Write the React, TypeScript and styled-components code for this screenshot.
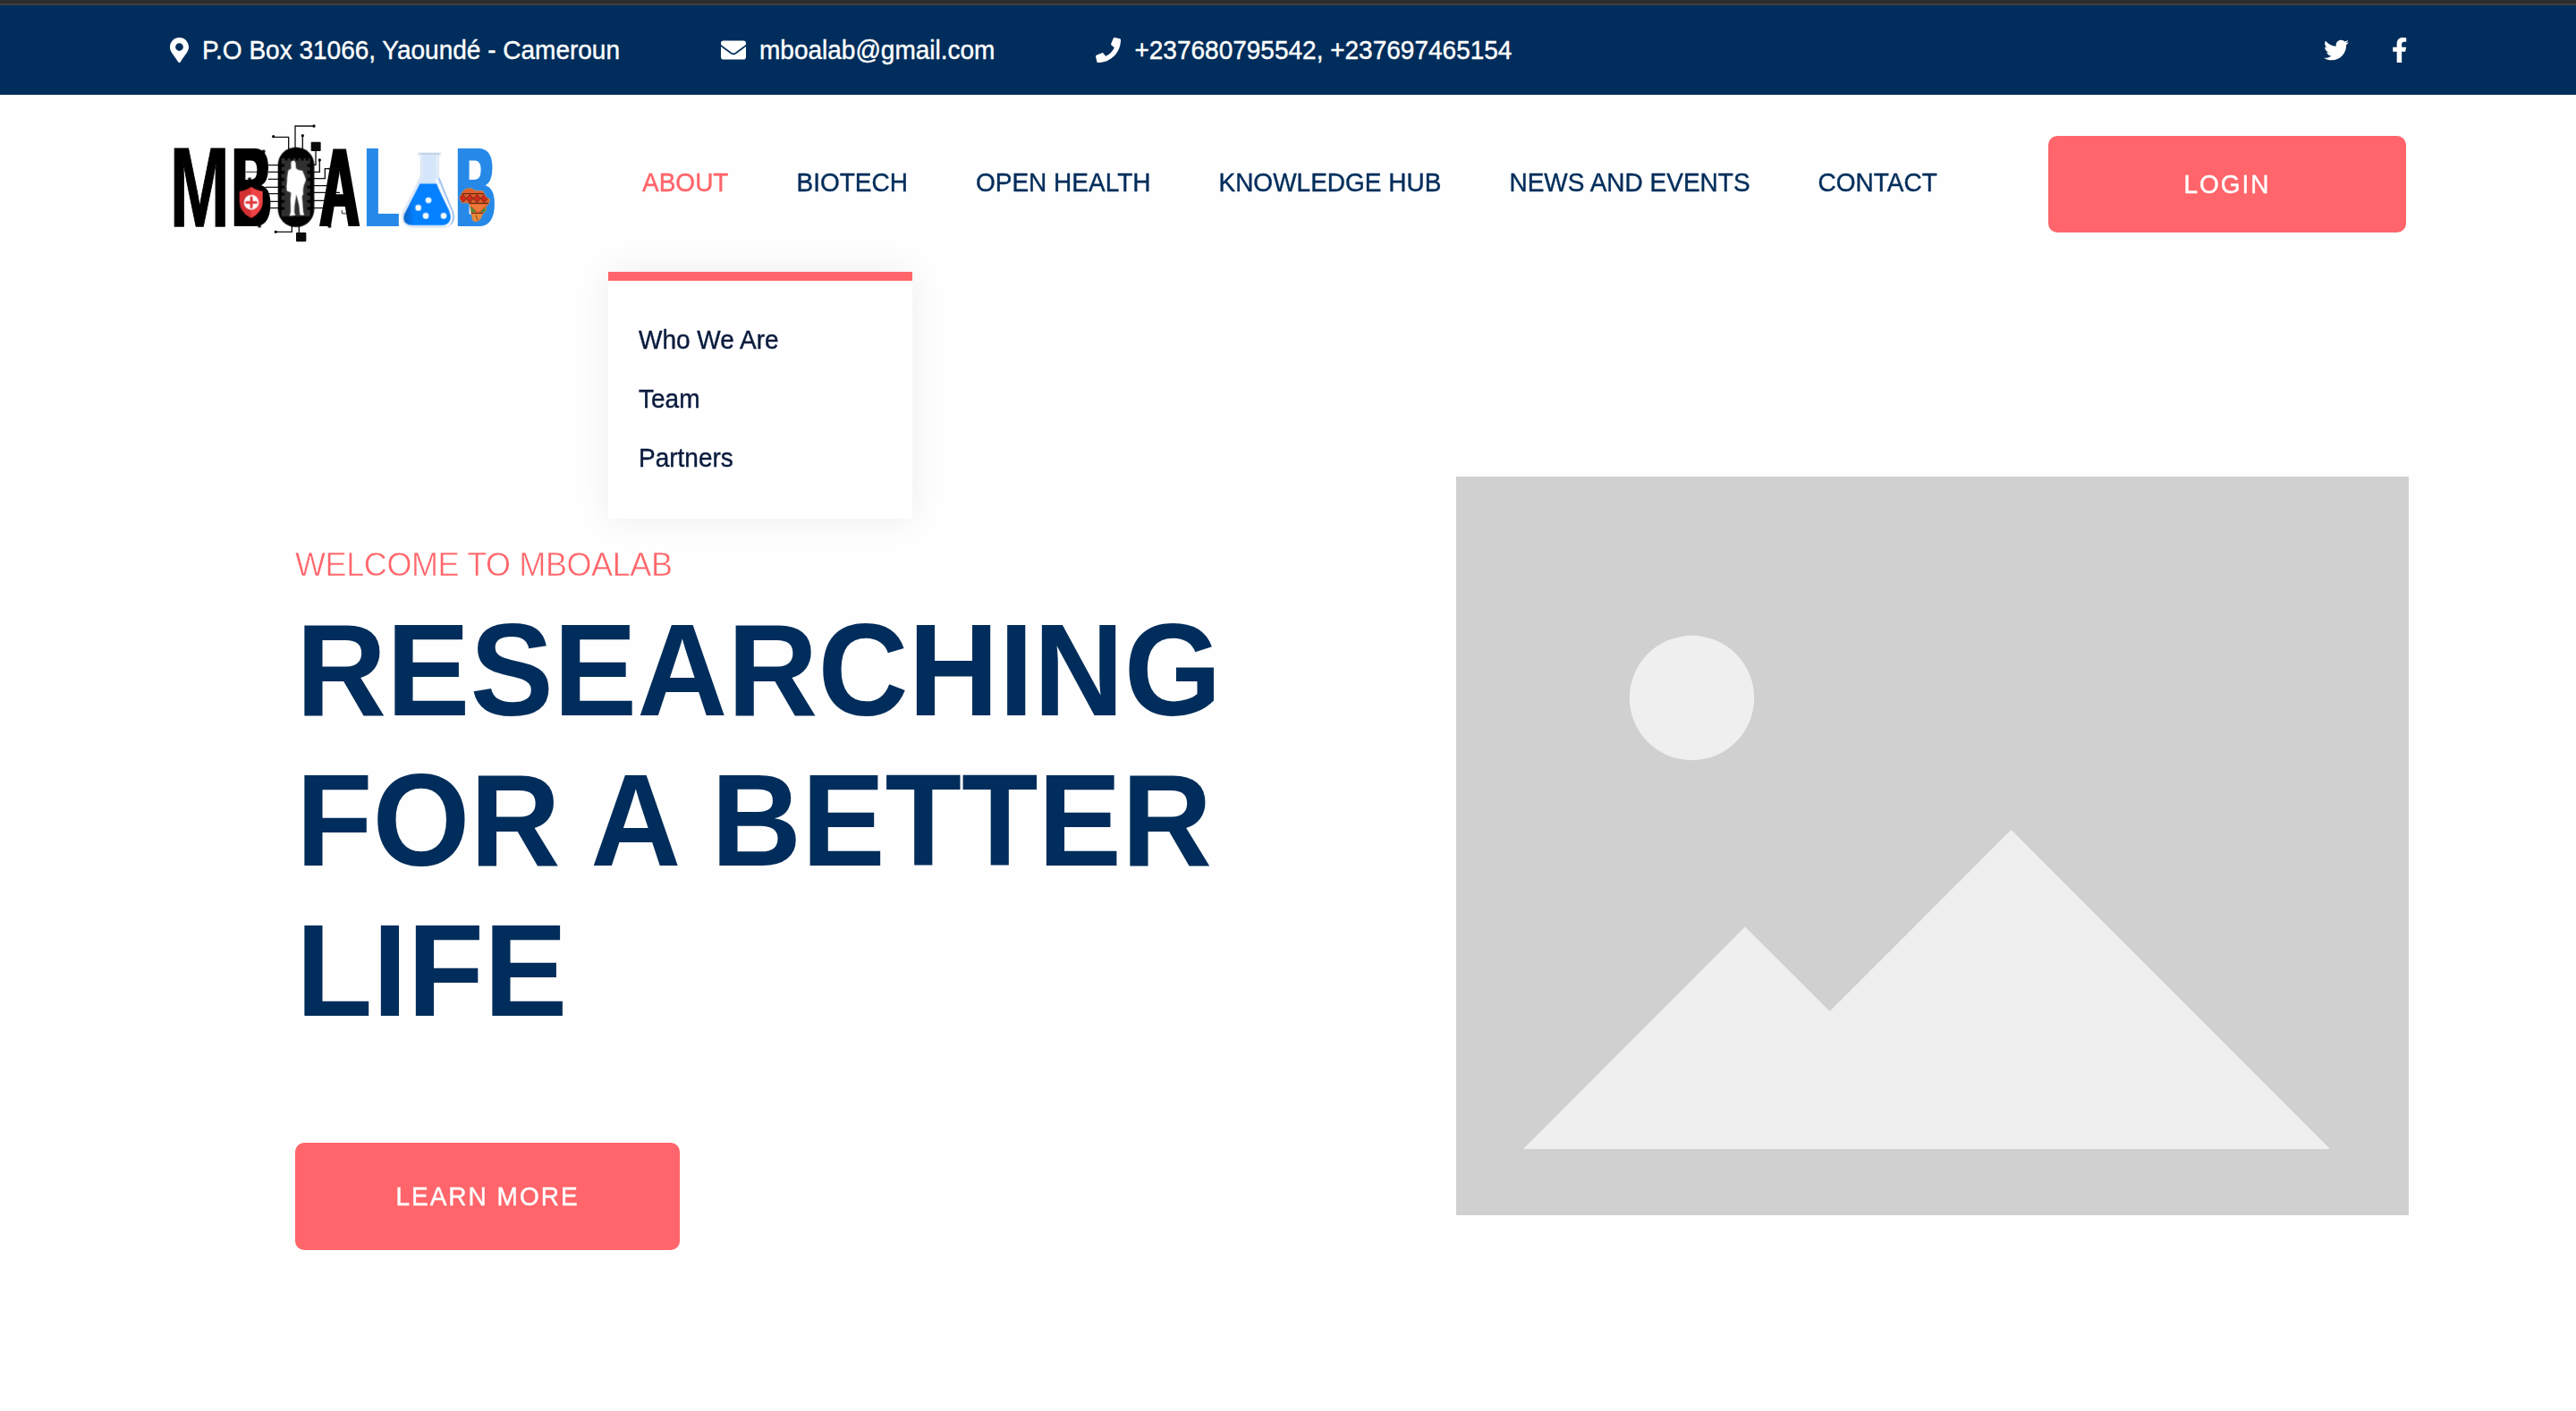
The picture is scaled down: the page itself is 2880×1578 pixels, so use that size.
import React from "react";
import styled, { createGlobalStyle } from "styled-components";
import {
  FaMapMarkerAlt,
  FaEnvelope,
  FaPhone,
  FaTwitter,
  FaFacebookF,
} from "react-icons/fa";

const navy = "#002d5b";
const coral = "#ff656a";

const GlobalStyle = createGlobalStyle`
  * { box-sizing: border-box; }
  body {
    margin: 0;
    background: #fefefe;
    font-family: "Liberation Sans", Arial, Helvetica, sans-serif;
    font-size: 28px;
    color: ${navy};
  }
  a { color: inherit; text-decoration: none; }
`;

const Page = styled.div`
  width: 2880px;
  height: 1578px;
  overflow: hidden;
`;

const WindowEdge = styled.div`
  height: 6px;
  background: #2e2e2e;
  border-bottom: 2px solid #404040;
`;

/* Liberation Sans has short, light capitals; a slight stretch and a hairline restore the Helvetica look. */
const Tall = styled.span`
  display: inline-block;
  white-space: nowrap;
  transform: translateY(0.8px) scaleY(1.045);
  -webkit-text-stroke: 0.4px currentColor;
`;

const TopBar = styled.div`
  display: flex;
  align-items: center;
  justify-content: space-between;
  height: 100px;
  padding: 0 189px 0 190px;
  background: ${navy};
  color: #fff;
`;

const ContactList = styled.div`
  display: flex;
  gap: 113px;
`;

const ContactItem = styled.a`
  display: flex;
  align-items: center;
  gap: 15px;
  line-height: 40px;
`;

const Icon = styled.span<{ $w: number }>`
  display: block;
  flex: none;
  width: ${(p) => p.$w}px;
  height: 28px;
  svg { display: block; width: 100%; height: 100%; }
`;

const SocialList = styled.div`
  display: flex;
  gap: 48px;
`;

const Header = styled.header`
  display: flex;
  align-items: center;
  height: 200px;
  padding: 0 190px;
`;

const LogoArt = styled.svg`
  display: block;
  flex: none;
  width: 370px;
  height: 150px;
  margin-top: 2px;
`;

const WordLetter = styled.text`
  font-family: "Liberation Sans", Arial, sans-serif;
  font-weight: 700;
  font-size: 378px;
`;

const Nav = styled.nav`
  display: flex;
  gap: 76px;
  margin-left: 158px;
  height: 100%;
`;

const NavItem = styled.div<{ $active?: boolean }>`
  position: relative;
  line-height: 196px;
  color: ${(p) => (p.$active ? coral : navy)};
`;

const Dropdown = styled.div`
  position: absolute;
  z-index: 2;
  top: 198px;
  left: -38px;
  display: flex;
  flex-direction: column;
  align-items: flex-start;
  width: 340px;
  height: 276px;
  padding: 33px 34px 0;
  border-top: 10px solid ${coral};
  background: #fff;
  color: #0a1b3d;
  line-height: 66px;
  box-shadow: 0 0 36px rgba(0, 0, 0, 0.07);
`;

const Button = styled.button<{ $w: number; $h: number }>`
  display: block;
  width: ${(p) => p.$w}px;
  height: ${(p) => p.$h}px;
  padding: 0;
  border: 0;
  border-radius: 10px;
  background: ${coral};
  color: #fff;
  font: inherit;
  letter-spacing: 2px;
`;

const LoginSlot = styled.div`
  margin-left: auto;
`;

const Hero = styled.main`
  display: flex;
  align-items: flex-start;
  justify-content: space-between;
  padding: 227px 187px 0 330px;
`;

const HeroCopy = styled.section`
  margin-top: 71px;
`;

const Eyebrow = styled.p`
  margin: 0 0 8px;
  font-size: 36px;
  line-height: 54px;
  letter-spacing: -0.4px;
  color: ${coral};
`;

const EyebrowText = styled(Tall)`
  -webkit-text-stroke: 0.55px #fefefe;
`;

const Headline = styled.h1`
  margin: 0 0 108px;
  font-size: 140px;
  font-weight: 700;
  line-height: 168px;
`;

const HeadlineRow = styled.span`
  display: block;
  padding-left: 1px;
  white-space: nowrap;
  transform: scaleY(1.05);
`;

const Placeholder = styled.svg`
  display: block;
  flex: none;
  width: 1065px;
  height: 826px;
`;

const africaOutline =
  "M1013 281L1024 273L1044 272L1050 279L1080 281L1090 300L1103 309L1101 320L1090 334L1090 347L1079 358L1071 376L1058 384L1046 380L1040 354L1036 327L1028 320L1010 321L1000 304Z";

function Logo() {
  return (
    <LogoArt viewBox="30 36 1110 450">
      <defs>
        <filter id="widen" x="-20%" y="-20%" width="140%" height="140%">
          <feMorphology operator="dilate" radius="6 0.01" />
        </filter>
        <linearGradient id="liquid" x1="0" y1="0" x2="1" y2="0">
          <stop offset="0" stopColor="#0a62c4" />
          <stop offset="0.22" stopColor="#0580ff" />
          <stop offset="1" stopColor="#0580ff" />
        </linearGradient>
        <clipPath id="africa">
          <path d={africaOutline} />
        </clipPath>
      </defs>

      {/* circuit traces */}
      <g fill="none" stroke="#111" strokeWidth="4">
        <path d="M450 140V63H512M428 140V100H377M475 140V95" />
        <path d="M519 145V193H510M532 177V217H510M510 239H550V206H604M510 263H580M510 286H600M510 313H570M510 338H560" />
        <path d="M360 194H396M360 217H396M360 241H396M350 268H396M360 290H396M360 316H396M350 338H396" />
        <path d="M439 398V418H385M463 398V424" />
      </g>
      <g fill="#0a0a0a">
        <circle cx="513" cy="63" r="5" />
        <circle cx="377" cy="98" r="5" />
        <circle cx="475" cy="95" r="5" />
        <circle cx="532" cy="177" r="5" />
        <circle cx="385" cy="418" r="5" />
        <rect x="503" y="116" width="33" height="31" rx="3" />
        <rect x="453" y="420" width="34" height="31" rx="3" />
      </g>

      {/* wordmark */}
      <WordLetter transform="translate(29.5 398) scale(.638 1)" stroke="#000" strokeWidth="4">M</WordLetter>
      <g filter="url(#widen)">
        <WordLetter transform="translate(239 398) scale(.477 1)">B</WordLetter>
      </g>
      <g filter="url(#widen)">
        <WordLetter transform="translate(532.5 398) scale(.488 1)">A</WordLetter>
      </g>
      <g fill="#2589e8" filter="url(#widen)">
        <WordLetter transform="translate(683.5 398) scale(.494 1)">L</WordLetter>
        <WordLetter transform="translate(989 398) scale(.482 1)">B</WordLetter>
      </g>
      <path d="M284 217H327M560 206H604M607 345V356H625" fill="none" stroke="#111" strokeWidth="3" />
      <g fill="#0a0a0a">
        <circle cx="297" cy="241" r="6" />
        <circle cx="330" cy="398" r="6" />
        <circle cx="565" cy="399" r="6" />
        <circle cx="344" cy="148" r="6" />
      </g>

      {/* chip with a standing figure */}
      <rect x="392" y="134" width="122" height="268" rx="60" fill="#020202" />
      <path d="M404 171H500V366H404Z" fill="#303030" />
      <path
        d="M420 166V178M438 166V178M456 166V178M474 166V178M490 166V178"
        stroke="#020202"
        strokeWidth="9"
      />
      <path
        d="M402 195H414M402 218H414M402 242H414M402 268H414M402 291H414M402 316H414M402 339H414M490 195H502M490 218H502M490 242H502M490 268H502M490 291H502M490 316H502M490 339H502"
        stroke="#020202"
        strokeWidth="10"
      />
      <path
        d="M436 184Q444 172 451 184L453 205Q463 213 474 212Q480 225 486 242Q484 252 479 262Q475 275 477 292L473 298L477 350L480 362L466 361L463 330L454 292L448 330L447 352L451 362L431 364L435 350L434 310L436 286L422 280L421 265Q423 250 423 236Q425 218 427 211L436 206Z"
        fill="#fff"
      />

      {/* shield */}
      <path d="M302 267Q322 281 341 282V318Q340 352 302 372Q264 352 263 318V282Q283 281 302 267Z" fill="#d22f33" />
      <path d="M302 267Q322 281 341 282V318Q340 352 302 372Z" fill="#ef4345" />
      <circle cx="303" cy="319" r="25" fill="#fff" />
      <path d="M303 303V335M287 319H319" stroke="#e03a3c" strokeWidth="9" strokeLinecap="round" />

      {/* flask */}
      <path
        d="M862 154H939L930 166V230Q938 250 980 352Q992 398 950 402H844Q800 398 812 350Q866 250 872 226V166Z"
        fill="#eef5fd"
        stroke="#c9d6ea"
        strokeWidth="3"
      />
      <path d="M877 160H924V228Q928 240 936 256H862Q874 238 877 226Z" fill="#d5e6fa" />
      <path d="M870 157H933" stroke="#a9bad4" strokeWidth="3" />
      <path d="M868 256H926L966 344Q984 392 944 396H846Q806 394 816 358Z" fill="url(#liquid)" />
      <path d="M922 240Q930 268 970 346Q984 384 956 397" fill="none" stroke="#fff" strokeWidth="6" />
      <path d="M932 238Q944 270 978 350Q986 378 972 392" fill="none" stroke="#4a8ee8" strokeWidth="2.5" />
      <g fill="#f4faff">
        <circle cx="897" cy="312" r="10" />
        <circle cx="863" cy="337" r="10" />
        <circle cx="888" cy="364" r="10" />
        <circle cx="948" cy="364" r="10" />
      </g>

      {/* patterned map of Africa */}
      <g clipPath="url(#africa)">
        <rect x="995" y="265" width="115" height="125" fill="#e0602a" />
        <path d="M995 290H1110M1000 322H1110" stroke="#6b2c14" strokeWidth="4" />
        <path
          d="M1000 306L1012 292L1024 306L1036 292L1048 306L1060 292L1072 306L1084 292L1096 306L1084 320L1072 306L1060 320L1048 306L1036 320L1024 306L1012 320Z"
          fill="#cf2a1c"
          stroke="#6b2c14"
          strokeWidth="2.5"
        />
        <path d="M1036 326L1064 352L1092 326Z" fill="#ef7a3c" />
        <path d="M1036 330V352H1058ZM1094 330V352H1070Z" fill="#4d8a3a" />
        <path d="M1036 355H1086" stroke="#6b2c14" strokeWidth="3" />
        <path d="M1038 358H1082L1060 388H1044Z" fill="#e88a3c" />
        <path d="M1056 362L1064 384" stroke="#8a3e18" strokeWidth="3" />
      </g>
      <path d={africaOutline} fill="none" stroke="#b98a62" strokeWidth="3" />
    </LogoArt>
  );
}

const navLinks = ["BIOTECH", "OPEN HEALTH", "KNOWLEDGE HUB", "NEWS AND EVENTS", "CONTACT"];
const aboutLinks = ["Who We Are", "Team", "Partners"];
const headline = ["RESEARCHING", "FOR A BETTER", "LIFE"];

export default function App() {
  return (
    <Page>
      <GlobalStyle />
      <WindowEdge />
      <TopBar>
        <ContactList>
          <ContactItem>
            <Icon $w={21}><FaMapMarkerAlt /></Icon>
            <Tall>P.O Box 31066, Yaoundé - Cameroun</Tall>
          </ContactItem>
          <ContactItem>
            <Icon $w={28}><FaEnvelope /></Icon>
            <Tall>mboalab@gmail.com</Tall>
          </ContactItem>
          <ContactItem>
            <Icon $w={28}><FaPhone /></Icon>
            <Tall>+237680795542, +237697465154</Tall>
          </ContactItem>
        </ContactList>
        <SocialList>
          <Icon $w={28}><FaTwitter /></Icon>
          <Icon $w={17.5}><FaFacebookF /></Icon>
        </SocialList>
      </TopBar>

      <Header>
        <Logo />
        <Nav>
          <NavItem $active>
            <Tall>ABOUT</Tall>
            <Dropdown>
              {aboutLinks.map((label) => (
                <Tall key={label}>{label}</Tall>
              ))}
            </Dropdown>
          </NavItem>
          {navLinks.map((label) => (
            <NavItem key={label}>
              <Tall>{label}</Tall>
            </NavItem>
          ))}
        </Nav>
        <LoginSlot>
          <Button $w={400} $h={108}>
            <Tall>LOGIN</Tall>
          </Button>
        </LoginSlot>
      </Header>

      <Hero>
        <HeroCopy>
          <Eyebrow>
            <EyebrowText>WELCOME TO MBOALAB</EyebrowText>
          </Eyebrow>
          <Headline>
            {headline.map((row) => (
              <HeadlineRow key={row}>{row}</HeadlineRow>
            ))}
          </Headline>
          <Button $w={430} $h={120}>
            <Tall>LEARN MORE</Tall>
          </Button>
        </HeroCopy>
        <Placeholder viewBox="1628 533 1065 826">
          <rect x="1628" y="533" width="1065" height="826" fill="#d0d0d0" />
          <circle cx="1891.5" cy="780.5" r="69.7" fill="#efefef" />
          <path d="M1703 1285L1951 1036.5L2045.7 1131L2248.5 928L2605 1285Z" fill="#efefef" />
        </Placeholder>
      </Hero>
    </Page>
  );
}
